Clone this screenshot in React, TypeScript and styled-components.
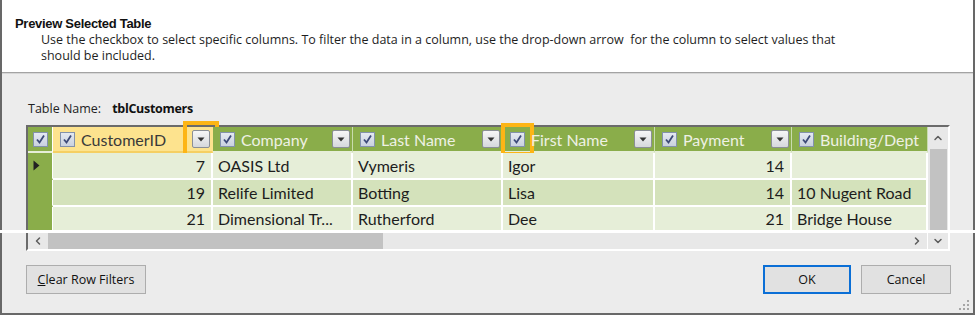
import { FC } from 'react';
import styled, { createGlobalStyle } from 'styled-components';
import { ChevronLeft, ChevronRight, ChevronUp, ChevronDown } from 'lucide-react';

const GlobalStyle = createGlobalStyle`
  html, body {
    margin: 0;
    padding: 0;
    background: #fff;
  }
  body {
    font-family: 'Open Sans', 'Liberation Sans', Arial, sans-serif;
  }
`;

const Page = styled.div`
  position: relative;
  width: 977px;
  height: 316px;
  background: #fff;
  overflow: hidden;
`;

const Dialog = styled.div`
  box-sizing: border-box;
  width: 975px;
  height: 315px;
  border: 2px solid #686868;
  border-top: none;
  display: flex;
  flex-direction: column;
  position: relative;
`;

const Intro = styled.div`
  box-sizing: border-box;
  height: 73px;
  padding: 15px 0 0 13px;
  background: #fff;
  border-bottom: 1px solid #a3a3a3;
`;

const Title = styled.div`
  font-family: 'Liberation Sans', Arial, sans-serif;
  font-size: 13px;
  font-weight: bold;
  line-height: 17px;
  color: #111;
  letter-spacing: -0.3px;
`;

const Description = styled.div`
  padding-left: 26px;
  font-size: 12.5px;
  line-height: 16px;
  color: #1e1e1e;
  width: 830px;
`;

const Body = styled.div`
  flex: 1;
  background: #ececec;
  border-top: 1px solid #d6d6d6;
  padding: 27px 22px 0 24px;
  display: flex;
  flex-direction: column;
`;

const TableNameRow = styled.div`
  display: flex;
  gap: 11px;
  padding-left: 2px;
  font-size: 12.5px;
  line-height: 16px;
  color: #222;
  height: 24px;
`;

const TableName = styled.span`
  font-weight: bold;
  color: #111;
  letter-spacing: -0.3px;
`;

const Grid = styled.div`
  box-sizing: border-box;
  width: 924px;
  border-left: 2px solid #6b6b6b;
  border-top: 2px solid #6b6b6b;
  border-right: 2px solid #fff;
  border-bottom: 2px solid #fff;
  display: flex;
  flex-direction: column;
  font-family: Lato, 'Liberation Sans', sans-serif;
  font-size: 16px;
`;

const GridMain = styled.div`
  display: flex;
`;

const Rows = styled.div`
  width: 900px;
  display: flex;
  flex-direction: column;
`;

const Row = styled.div<{ $height: number }>`
  display: flex;
  height: ${(p) => p.$height}px;
`;

const RowHeader = styled.div<{ $header?: boolean }>`
  box-sizing: border-box;
  width: 25px;
  background: #8aad4a;
  border-right: 1px solid #fff;
  border-bottom: 2px solid ${(p) => (p.$header ? '#e6eed8' : '#8aad4a')};
  display: flex;
  align-items: center;
  padding-left: 5px;
`;

const HeaderCell = styled.div<{ $width: number; $active?: boolean }>`
  box-sizing: border-box;
  width: ${(p) => p.$width}px;
  background: ${(p) => (p.$active ? '#fde38e' : '#8aad4a')};
  border-right: 1px solid ${(p) => (p.$active ? '#fde38e' : '#c9dcae')};
  border-bottom: 2px solid ${(p) => (p.$active ? '#f5cf63' : '#e6eed8')};
  display: flex;
  align-items: center;
  padding: 0 2px 0 7px;
`;

const HeaderLabel = styled.span<{ $active?: boolean }>`
  flex: 1;
  margin-left: 6px;
  color: ${(p) => (p.$active ? '#3a3a3a' : '#eef1e4')};
  white-space: nowrap;
  overflow: hidden;
`;

const Cell = styled.div<{ $width: number; $alt?: boolean; $right?: boolean }>`
  box-sizing: border-box;
  width: ${(p) => p.$width}px;
  background: ${(p) => (p.$alt ? '#d4e2bb' : '#e6eed8')};
  border-right: 2px solid #fff;
  border-bottom: 2px solid #fff;
  display: flex;
  align-items: center;
  justify-content: ${(p) => (p.$right ? 'flex-end' : 'flex-start')};
  padding: 0 6px 0 5px;
  color: #1d1d1d;
  white-space: nowrap;
  overflow: hidden;
`;

const Highlight = styled.span<{ $on?: boolean }>`
  display: inline-flex;
  outline: ${(p) => (p.$on ? '4px solid #fdb515' : 'none')};
  outline-offset: ${(p) => (p.$on ? '5px' : '0')};
`;

const CheckBox = styled.span`
  box-sizing: border-box;
  width: 15px;
  height: 15px;
  border: 1px solid #8392ab;
  background: linear-gradient(#e4e9f1, #c9d1df);
  display: inline-flex;
  align-items: center;
  justify-content: center;
  flex: none;
`;

const DropButton = styled.span`
  box-sizing: border-box;
  width: 18px;
  height: 18px;
  border: 1px solid #8b8f96;
  border-radius: 2px;
  background: linear-gradient(#f6f6f6, #d6d8dc);
  display: inline-flex;
  align-items: center;
  justify-content: center;
  flex: none;
`;

const VScroll = styled.div`
  width: 20px;
  background: #e8e8e8;
  display: flex;
  flex-direction: column;
  align-items: center;
`;

const ArrowBox = styled.div<{ $w?: number; $h?: number }>`
  width: ${(p) => p.$w ?? 20}px;
  height: ${(p) => p.$h ?? 20}px;
  display: flex;
  align-items: center;
  justify-content: center;
  color: #5c5c5c;
  flex: none;
`;

const VThumb = styled.div`
  flex: 1;
  width: 17px;
  background: #c2c2c2;
`;

const HScroll = styled.div`
  height: 17px;
  display: flex;
  background: #e8e8e8;
`;

const HThumb = styled.div<{ $w: number }>`
  width: ${(p) => p.$w}px;
  background: #c2c2c2;
`;

const HTrack = styled.div`
  flex: 1;
`;

const Corner = styled.div`
  width: 20px;
  border-left: 1px solid #fff;
  display: flex;
  align-items: center;
  justify-content: center;
  color: #5c5c5c;
`;

const ButtonRow = styled.div`
  display: flex;
  align-items: center;
  gap: 10px;
  margin-top: 14px;
`;

const Spacer = styled.div`
  flex: 1;
`;

const Button = styled.button<{ $w: number; $focus?: boolean }>`
  box-sizing: border-box;
  width: ${(p) => p.$w}px;
  height: 29px;
  background: #e1e1e1;
  border: ${(p) => (p.$focus ? '2px solid #0b6fd6' : '1px solid #adadad')};
  font-family: 'Open Sans', 'Liberation Sans', Arial, sans-serif;
  font-size: 12.5px;
  color: #111;
  padding: 0;
`;

const CutLine = styled.div`
  position: absolute;
  left: 0;
  right: 0;
  top: 230px;
  height: 3px;
  background: #fff;
`;

const Grip = styled.svg`
  position: absolute;
  right: 3px;
  bottom: 2px;
`;

const Check: FC = () => (
  <CheckBox>
    <svg width="11" height="11" viewBox="0 0 11 11">
      <path d="M2 5.5 L4.5 8.5 L9 1.5" fill="none" stroke="#3d4a78" strokeWidth="1.8" />
    </svg>
  </CheckBox>
);

const Drop: FC = () => (
  <DropButton>
    <svg width="8" height="5" viewBox="0 0 8 5">
      <path d="M0.5 0.5 H7.5 L4 4.5 Z" fill="#333" />
    </svg>
  </DropButton>
);

interface Column {
  name: string;
  width: number;
  right?: boolean;
  active?: boolean;
  drop?: boolean;
  markCheck?: boolean;
  markDrop?: boolean;
}

const columns: Column[] = [
  { name: 'CustomerID', width: 160, right: true, active: true, drop: true, markDrop: true },
  { name: 'Company', width: 140, drop: true },
  { name: 'Last Name', width: 150, drop: true },
  { name: 'First Name', width: 152, drop: true, markCheck: true },
  { name: 'Payment', width: 137, right: true, drop: true },
  { name: 'Building/Dept', width: 136 },
];

const rows = [
  ['7', 'OASIS Ltd', 'Vymeris', 'Igor', '14', ''],
  ['19', 'Relife Limited', 'Botting', 'Lisa', '14', '10 Nugent Road'],
  ['21', 'Dimensional Tr...', 'Rutherford', 'Dee', '21', 'Bridge House'],
];

export default function App() {
  return (
    <Page>
      <GlobalStyle />
      <Dialog>
        <Intro>
          <Title>Preview Selected Table</Title>
          <Description>
            Use the checkbox to select specific columns. To filter the data in a column, use the
            drop-down arrow&nbsp; for the column to select values that should be included.
          </Description>
        </Intro>
        <Body>
          <TableNameRow>
            <span>Table Name:</span>
            <TableName>tblCustomers</TableName>
          </TableNameRow>
          <Grid>
            <GridMain>
              <Rows>
                <Row $height={26}>
                  <RowHeader $header>
                    <Check />
                  </RowHeader>
                  {columns.map((c) => (
                    <HeaderCell key={c.name} $width={c.width} $active={c.active}>
                      <Highlight $on={c.markCheck}>
                        <Check />
                      </Highlight>
                      <HeaderLabel $active={c.active}>{c.name}</HeaderLabel>
                      {c.drop && (
                        <Highlight $on={c.markDrop}>
                          <Drop />
                        </Highlight>
                      )}
                    </HeaderCell>
                  ))}
                </Row>
                {rows.map((r, i) => (
                  <Row key={i} $height={i === 2 ? 25 : 27}>
                    <RowHeader>
                      {i === 0 && (
                        <svg width="7" height="11" viewBox="0 0 7 11">
                          <path d="M0.5 0.5 L6.5 5.5 L0.5 10.5 Z" fill="#222" />
                        </svg>
                      )}
                    </RowHeader>
                    {columns.map((c, j) => (
                      <Cell key={c.name} $width={c.width} $alt={i === 1} $right={c.right}>
                        {r[j]}
                      </Cell>
                    ))}
                  </Row>
                ))}
              </Rows>
              <VScroll>
                <ArrowBox $h={22}>
                  <ChevronUp size={12} strokeWidth={3} />
                </ArrowBox>
                <VThumb />
              </VScroll>
            </GridMain>
            <HScroll>
              <ArrowBox $h={17}>
                <ChevronLeft size={12} strokeWidth={3} />
              </ArrowBox>
              <HThumb $w={335} />
              <HTrack />
              <ArrowBox $h={17}>
                <ChevronRight size={12} strokeWidth={3} />
              </ArrowBox>
              <Corner>
                <ChevronDown size={12} strokeWidth={3} />
              </Corner>
            </HScroll>
          </Grid>
          <ButtonRow>
            <Button $w={120}>
              <u>C</u>lear Row Filters
            </Button>
            <Spacer />
            <Button $w={88} $focus>
              OK
            </Button>
            <Button $w={90}>Cancel</Button>
          </ButtonRow>
        </Body>
        <Grip width="12" height="12" viewBox="0 0 12 12">
          {[
            [9, 1],
            [5, 5],
            [9, 5],
            [1, 9],
            [5, 9],
            [9, 9],
          ].map(([x, y]) => (
            <rect key={`${x}-${y}`} x={x} y={y} width="2" height="2" fill="#a6a6a6" />
          ))}
        </Grip>
      </Dialog>
      <CutLine />
    </Page>
  );
}
